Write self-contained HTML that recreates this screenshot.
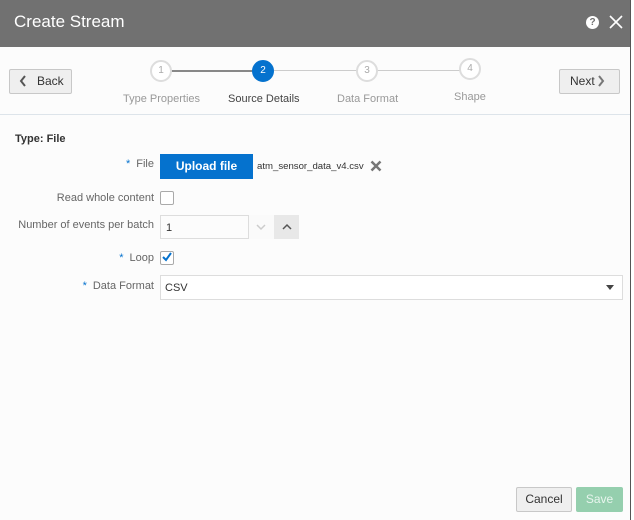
<!DOCTYPE html>
<html><head><style>
body{margin:0;width:634px;height:520px;overflow:hidden;background:#fff;font-family:"Liberation Sans",sans-serif;position:relative}
.dlg{position:absolute;left:0;top:0;width:630px;height:520px;background:#fcfcfc;border-right:1px solid #555}
.hdr{position:absolute;left:0;top:0;width:630px;height:47px;background:#717171}
.hdr .t{position:absolute;left:14px;top:12px;color:#fff;font-size:17px}
.btn{position:absolute;background:#efefef;border:1px solid #c8c8c8;border-radius:2px;font-size:12px;color:#333;box-sizing:border-box}
.circ{position:absolute;width:22px;height:22px;border:2px solid #ddd;border-radius:50%;box-sizing:border-box;font-size:10px;color:#aaa;text-align:center;line-height:18px;background:#fff}
.lab{position:absolute;font-size:11px;color:#999}
.fl{position:absolute;font-size:11px;color:#666;text-align:right;right:476px}
.star{color:#0572ce;margin-right:6px}
</style></head><body>
<div class="dlg">
<div class="hdr"><div class="t">Create Stream</div>
<div style="position:absolute;left:586px;top:16px;width:13px;height:13px;border-radius:50%;background:#fff;color:#717171;font-size:10px;font-weight:bold;text-align:center;line-height:13px">?</div>
<svg style="position:absolute;left:608px;top:14px" width="16" height="16"><path d="M2 2L14 14M14 2L2 14" stroke="#fff" stroke-width="1.6"/></svg>
</div>
<div class="btn" style="left:9px;top:69px;width:63px;height:25px;line-height:23px;padding-left:27px">Back</div>
<svg style="position:absolute;left:19px;top:75px" width="8" height="12"><path d="M6 1L2 6L6 11" stroke="#555" stroke-width="2" fill="none"/></svg>
<div class="btn" style="left:559px;top:69px;width:61px;height:25px;line-height:23px;padding-left:10px">Next</div>
<svg style="position:absolute;left:597px;top:75px" width="8" height="12"><path d="M2 1L6 6L2 11" stroke="#777" stroke-width="2" fill="none"/></svg>
<div style="position:absolute;left:170px;top:70px;width:84px;height:2px;background:#888"></div>
<div style="position:absolute;left:274px;top:70px;width:84px;height:1px;background:#ccc"></div>
<div style="position:absolute;left:377px;top:70px;width:84px;height:1px;background:#ccc"></div>
<div class="circ" style="left:150px;top:60px">1</div>
<div class="circ" style="left:252px;top:60px;background:#0572ce;border-color:#0572ce;color:#fff">2</div>
<div class="circ" style="left:356px;top:60px">3</div>
<div class="circ" style="left:459px;top:58px">4</div>
<div class="lab" style="left:123px;top:93px">Type Properties</div>
<div class="lab" style="left:228px;top:93px;color:#444">Source Details</div>
<div class="lab" style="left:337px;top:93px">Data Format</div>
<div class="lab" style="left:454px;top:91px">Shape</div>
<div style="position:absolute;left:0;top:114px;width:630px;height:1px;background:#dde4ea"></div>
<div style="position:absolute;left:15px;top:133px;font-size:11px;font-weight:bold;color:#333">Type: File</div>
<div class="fl" style="top:158px"><span class="star">*</span>File</div>
<div style="position:absolute;left:160px;top:154px;width:93px;height:25px;background:#0572ce;color:#fff;font-size:12px;font-weight:bold;text-align:center;line-height:25px">Upload file</div>
<div style="position:absolute;left:257px;top:161px;font-size:9.6px;color:#333">atm_sensor_data_v4.csv</div>
<svg style="position:absolute;left:370px;top:160px" width="12" height="12"><path d="M1.5 1.5L10.5 10.5M10.5 1.5L1.5 10.5" stroke="#777" stroke-width="2.5"/></svg>
<div class="fl" style="top:192px">Read whole content</div>
<div style="position:absolute;left:160px;top:191px;width:12px;height:12px;border:1px solid #aaa;border-radius:2px;background:#fff"></div>
<div class="fl" style="top:219px">Number of events per batch</div>
<div style="position:absolute;left:160px;top:215px;width:139px;height:24px;border:1px solid #ddd;box-sizing:border-box;background:#fcfcfc"></div>
<div style="position:absolute;left:166px;top:222px;font-size:11px;color:#333">1</div>
<div style="position:absolute;left:248px;top:215px;width:26px;height:24px;border-left:1px solid #ddd;background:#fafafa"></div>
<div style="position:absolute;left:274px;top:215px;width:25px;height:24px;background:#e8e8e8"></div>
<svg style="position:absolute;left:255px;top:222px" width="12" height="10"><path d="M2 3L6 7L10 3" stroke="#ccc" stroke-width="1.5" fill="none"/></svg>
<svg style="position:absolute;left:281px;top:222px" width="12" height="10"><path d="M2 7L6 3L10 7" stroke="#555" stroke-width="1.5" fill="none"/></svg>
<div class="fl" style="top:252px"><span class="star">*</span>Loop</div>
<div style="position:absolute;left:160px;top:251px;width:12px;height:12px;border:1px solid #aaa;border-radius:2px;background:#fff"></div>
<svg style="position:absolute;left:161px;top:251px" width="12" height="12"><path d="M2 6L5 9L10 2" stroke="#0572ce" stroke-width="2" fill="none"/></svg>
<div class="fl" style="top:280px"><span class="star">*</span>Data Format</div>
<div style="position:absolute;left:160px;top:275px;width:463px;height:25px;border:1px solid #ddd;box-sizing:border-box;background:#fff"></div>
<div style="position:absolute;left:165px;top:282px;font-size:11px;color:#333">CSV</div>
<svg style="position:absolute;left:606px;top:285px" width="8" height="6"><path d="M0 0H8L4 5Z" fill="#444"/></svg>
<div class="btn" style="left:516px;top:487px;width:56px;height:25px;line-height:23px;text-align:center">Cancel</div>
<div style="position:absolute;left:576px;top:487px;width:47px;height:25px;background:#95cfae;color:#e8f5ee;font-size:12px;text-align:center;line-height:25px;border-radius:2px">Save</div>
</div>
</body></html>
